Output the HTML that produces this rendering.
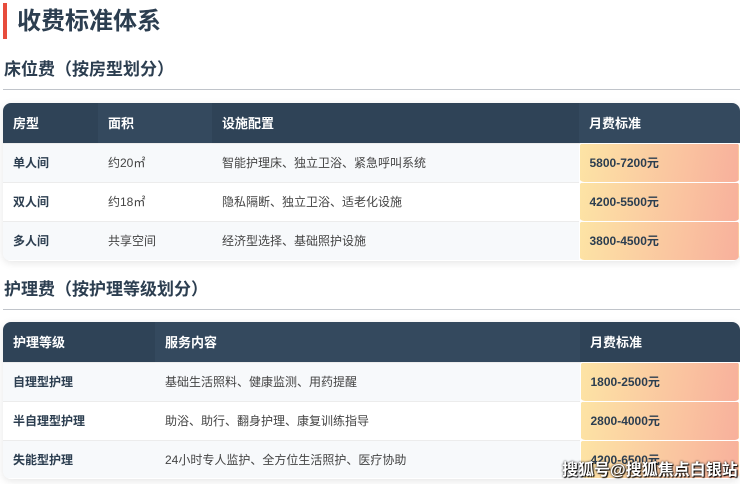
<!DOCTYPE html>
<html><head><meta charset="utf-8"><style>
*{margin:0;padding:0;box-sizing:border-box}
body{width:740px;height:484px;overflow:hidden;background:#fff;font-family:"Liberation Sans","Noto Sans CJK SC",sans-serif;color:#2c3e50;position:relative}
.bar{position:absolute;left:3px;top:3px;width:4px;height:36px;background:#e74c3c}
.title{position:absolute;left:17px;top:4px;font-size:24px;font-weight:bold;line-height:36px;color:#2c3e50}
.h2{position:absolute;left:4px;font-size:17px;font-weight:bold;color:#2c3e50;line-height:24px}
.line{position:absolute;left:3px;width:737px;height:1px;background:#c0c4ca}
table{position:absolute;left:3px;width:737px;border-collapse:collapse;border-radius:8px;overflow:hidden;box-shadow:0 2px 8px rgba(0,0,0,.1);font-size:12px}
th{background:#2f4357;color:#fff;text-align:left;font-weight:bold;height:40px;padding-left:10px;font-size:13px}
th:nth-child(2n){background:#34495e}
td{padding-left:10px;color:#444}
td:first-child{font-weight:bold;color:#2c3e50}
tr:nth-child(even) td{background:#f7f9fb}
tr td{border-top:1px solid #ececec}
td.p{background:linear-gradient(100deg,#fde4a5,#f8b09c)!important;font-weight:bold;color:#2c3e50;border:1px solid #fff;border-radius:5px;font-size:12px}
.wm{position:absolute;left:562px;top:456px;font-size:16px;font-weight:bold;color:#fff;text-shadow:0 0 2px #000,1px 1px 1px #000}
</style></head><body>
<div class="bar"></div><div class="title">收费标准体系</div>
<div class="h2" style="top:58px">床位费（按房型划分）</div>
<div class="line" style="top:89px"></div>
<table style="top:103px">
<tr><th style="width:95px">房型</th><th style="width:114px">面积</th><th style="width:367px">设施配置</th><th>月费标准</th></tr>
<tr style="height:39px"><td>单人间</td><td>约20㎡</td><td>智能护理床、独立卫浴、紧急呼叫系统</td><td class="p">5800-7200元</td></tr>
<tr style="height:39px"><td>双人间</td><td>约18㎡</td><td>隐私隔断、独立卫浴、适老化设施</td><td class="p">4200-5500元</td></tr>
<tr style="height:39px"><td>多人间</td><td>共享空间</td><td>经济型选择、基础照护设施</td><td class="p">3800-4500元</td></tr>
</table>
<div class="h2" style="top:278px">护理费（按护理等级划分）</div>
<div class="line" style="top:309px"></div>
<table style="top:322px">
<tr><th style="width:152px">护理等级</th><th style="width:425px">服务内容</th><th>月费标准</th></tr>
<tr style="height:39px"><td>自理型护理</td><td>基础生活照料、健康监测、用药提醒</td><td class="p">1800-2500元</td></tr>
<tr style="height:39px"><td>半自理型护理</td><td>助浴、助行、翻身护理、康复训练指导</td><td class="p">2800-4000元</td></tr>
<tr style="height:38px"><td>失能型护理</td><td>24小时专人监护、全方位生活照护、医疗协助</td><td class="p">4200-6500元</td></tr>
</table>
<div class="wm">搜狐号@搜狐焦点白银站</div>
</body></html>
